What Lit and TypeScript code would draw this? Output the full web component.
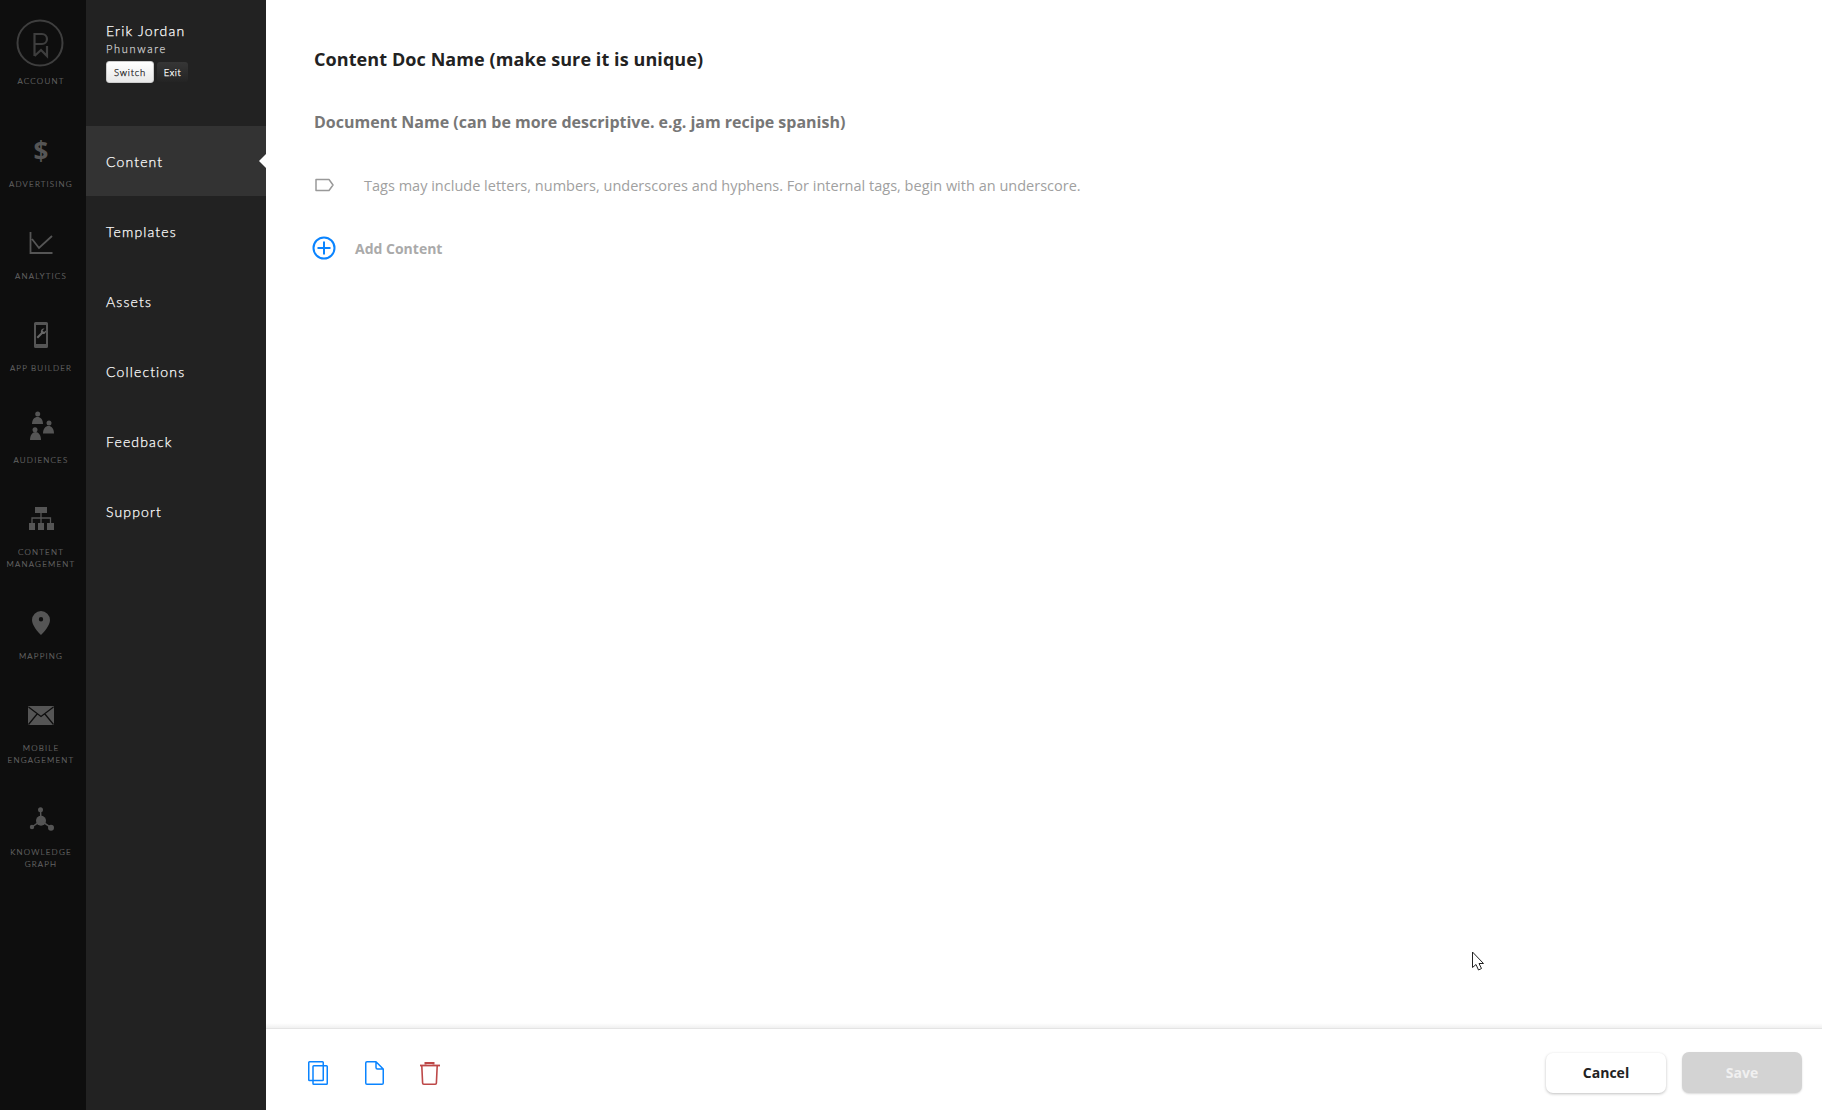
import { LitElement, html, css, svg } from "lit";
import { customElement } from "lit/decorators.js";

const railItems = [
  { label: ["ADVERTISING"], dollar: true, icon: svg`` },
  { label: ["ANALYTICS"], icon: svg`<path d="M9.500 9v21h22M11 16l7 9 13-12" fill="none" stroke="#555" stroke-width="1.800"/>` },
  { label: ["APP BUILDER"], icon: svg`<path fill="#555" fill-rule="evenodd" d="M14.500 7h11a1.500 1.500 0 0 1 1.500 1.500v23a1.500 1.500 0 0 1-1.500 1.500h-11a1.500 1.500 0 0 1-1.500-1.500v-23A1.500 1.500 0 0 1 14.500 7zm.5 3v19h10V10z"/><path fill="#666" d="M23.500 13.500l-2 2 1.500 1.500 2-1.500a3 3 0 0 1-3.500 3.500L17 23.500 15.500 22l4.500-4.500a3 3 0 0 1 3.500-4z"/>` },
  { label: ["AUDIENCES"], icon: svg`<g fill="#555"><circle cx="16.700" cy="7" r="2.500"/><path d="M11 17c0-4.500 2.500-7 5.500-7s5.500 2.500 5.500 7z"/><circle cx="28" cy="16" r="2.500"/><path d="M22 26.500c0-5 2.500-7.500 5.500-7.500s5.500 2.500 5.500 7.500z"/><circle cx="14" cy="22.700" r="2.500"/><path d="M9 33c0-5 2.500-8 5.500-8s5.500 3 5.500 8z"/></g>` },
  { label: ["CONTENT", "MANAGEMENT"], icon: svg`<g fill="#555"><rect x="14" y="8" width="12" height="6"/><rect x="8" y="24" width="6" height="7"/><rect x="17" y="24" width="6" height="7"/><rect x="26" y="24" width="7" height="7"/></g><path d="M20 14v10M11 24v-5h18.500v5" fill="none" stroke="#555" stroke-width="1.300"/>` },
  { label: ["MAPPING"], icon: svg`<path fill="#555" fill-rule="evenodd" d="M20 8a9 9 0 0 1 9 9c0 5.500-6 12-9 15-3-3-9-9.500-9-15a9 9 0 0 1 9-9zm0 6a2.200 2.200 0 1 0 0 4.400 2.200 2.200 0 0 0 0-4.400z"/>` },
  { label: ["MOBILE", "ENGAGEMENT"], icon: svg`<rect x="7" y="11" width="26" height="19" rx="1" fill="#555"/><path d="M7.500 12L20 21.500 32.500 12M7.500 29.500L16.500 18.500M32.500 29.500L23.500 18.500" fill="none" stroke="#0e0e0e" stroke-width="1.300"/>` },
  { label: ["KNOWLEDGE", "GRAPH"], icon: svg`<g fill="#555"><circle cx="20" cy="21.700" r="5"/><circle cx="19.500" cy="10.700" r="2.500"/><circle cx="11" cy="28" r="2.200"/><circle cx="30" cy="28.700" r="3"/></g><path d="M20 21.700L19.500 11M20 21.700L11 28M20 21.700L30 28.700" stroke="#555" stroke-width="1.500"/>` },
];

const menu = ["Content", "Templates", "Assets", "Collections", "Feedback", "Support"];

@customElement("app-root")
export class AppRoot extends LitElement {
  static styles = css`
    :host { display: flex; height: 1110px; width: 1822px; overflow: hidden; position: relative; font-family: "Open Sans", sans-serif; background: #fff; }
    .rail { width: 86px; flex: none; background: #0e0e0e; display: flex; flex-direction: column; align-items: center; padding: 20px 4px 0 0; box-sizing: border-box; font-family: Lato, sans-serif; }
    .account { display: flex; flex-direction: column; align-items: center; margin-bottom: 44px; }
    .account svg { width: 48px; height: 48px; margin: -1px 3px 8px 0; display: block; }
    .items { display: flex; flex-direction: column; align-items: center; gap: 33px; }
    .item { display: flex; flex-direction: column; align-items: center; }
    .item svg, .dollar { width: 40px; height: 40px; display: block; margin-bottom: 7px; }
    .dollar { font: 700 26px/40px "Open Sans", sans-serif; color: #555; text-align: center; }
    .lbl { font-size: 8px; line-height: 12px; letter-spacing: 1.200px; font-weight: 300; color: #666; -webkit-text-stroke: .2px #666; text-align: center; white-space: nowrap; }
    .panel { width: 180px; flex: none; background: #222; color: #fff; font-family: Lato, sans-serif; font-weight: 300; -webkit-text-stroke: .25px currentColor; }
    .user { height: 126px; padding: 22px 0 0 20px; box-sizing: border-box; }
    .name { font-size: 14px; line-height: 18px; letter-spacing: 1.200px; }
    .org { font-size: 11px; line-height: 14px; letter-spacing: 1.700px; color: #ccc; margin-top: 2px; }
    .btns { display: flex; gap: 3px; align-items: center; margin-top: 5px; }
    .sw { width: 48px; height: 22px; box-sizing: border-box; background: linear-gradient(#fff, #e8e8e8); border: 1px solid #ccc; color: #222; border-radius: 3px; font-size: 9.500px; letter-spacing: .8px; display: flex; align-items: center; justify-content: center; }
    .ex { width: 31px; height: 20px; background: linear-gradient(#363636, #242424); color: #fff; border-radius: 3px; font-size: 9.500px; letter-spacing: .5px; display: flex; align-items: center; justify-content: center; }
    .m { height: 70px; display: flex; align-items: center; padding-left: 20px; font-size: 14px; letter-spacing: 1.150px; position: relative; }
    .m.on { background: #333; }
    .m.on::after { content: ""; position: absolute; right: 0; top: 28px; border: 7px solid transparent; border-right-color: #fff; border-left-width: 0; }
    .main { flex: 1; display: flex; flex-direction: column; min-width: 0; }
    .body { flex: 1; padding: 47px 0 0 48px; box-sizing: border-box; }
    .title { font-size: 18px; font-weight: 700; line-height: 24px; letter-spacing: .085px; color: #222; }
    .doc { font-size: 16px; font-weight: 700; line-height: 22px; color: #777; margin-top: 40px; }
    .tags { display: flex; align-items: center; margin-top: 41px; height: 22px; font-size: 14.500px; letter-spacing: .01px; color: #a0a0a0; }
    .tags svg { width: 22px; height: 16px; margin-right: 28px; display: block; }
    .add { display: flex; align-items: center; margin-top: 40px; margin-left: -2px; font-size: 14px; font-weight: 700; color: #aaa; }
    .add svg { width: 24px; height: 24px; margin-right: 19px; display: block; }
    .foot { height: 82px; flex: none; position: relative; border-top: 1px solid #e4e4e4; box-sizing: border-box; display: flex; align-items: center; padding: 6px 20px 0 40px; }
    .foot::before { content: ""; position: absolute; left: 0; right: 0; top: -6px; height: 5px; background: linear-gradient(to bottom, rgba(0,0,0,0), rgba(0,0,0,.06)); }
    .icons { display: flex; gap: 32px; flex: 1; }
    .icons svg { width: 24px; height: 24px; display: block; }
    .btn { width: 120px; height: 40px; border-radius: 7px; display: flex; align-items: center; justify-content: center; font-size: 14px; font-weight: 700; }
    .cancel { color: #222; background: #fff; box-shadow: 0 1px 3px rgba(0,0,0,.25); margin-right: 16px; }
    .save { color: #f0f0f0; background: #d3d3d3; height: 41px; box-shadow: 0 1px 2px rgba(0,0,0,.15); }
    .cursor { position: absolute; left: 1471px; top: 951px; width: 14px; height: 21px; }
  `;

  render() {
    return html`
      <nav class="rail">
        <div class="account">
          <svg viewBox="0 0 48 48" fill="none" stroke="#3e3e3e" stroke-width="2">
            <circle cx="24" cy="24" r="22.500"/>
            <path d="M18.500 37V15h7.500a5 5 0 0 1 0 10h-7.500M18.500 37l6.500-6 6 6V27" stroke-width="2.200"/>
          </svg>
          <div class="lbl">ACCOUNT</div>
        </div>
        <div class="items">
          ${railItems.map(i => html`<div class="item">${i.dollar ? html`<div class="dollar">$</div>` : html`<svg viewBox="0 0 40 40">${i.icon}</svg>`}${i.label.map(l => html`<div class="lbl">${l}</div>`)}</div>`)}
        </div>
      </nav>
      <aside class="panel">
        <div class="user">
          <div class="name">Erik Jordan</div>
          <div class="org">Phunware</div>
          <div class="btns"><div class="sw">Switch</div><div class="ex">Exit</div></div>
        </div>
        ${menu.map((m, i) => html`<div class="m ${i === 0 ? "on" : ""}">${m}</div>`)}
      </aside>
      <main class="main">
        <div class="body">
          <div class="title">Content Doc Name (make sure it is unique)</div>
          <div class="doc">Document Name (can be more descriptive. e.g. jam recipe spanish)</div>
          <div class="tags">
            <svg viewBox="0 0 22 16" fill="none" stroke="#999" stroke-width="1.500"><path d="M2 2.500h13l4 5.500-4 5.500H2z" stroke-linejoin="round"/></svg>
            Tags may include letters, numbers, underscores and hyphens. For internal tags, begin with an underscore.
          </div>
          <div class="add">
            <svg viewBox="0 0 24 24" fill="none" stroke="#0a84ff" stroke-width="2"><circle cx="12" cy="12" r="10.500"/><path d="M12 5.500v13M5.500 12h13"/></svg>
            Add Content
          </div>
        </div>
        <div class="foot">
          <div class="icons">
            <svg viewBox="0 0 24 24" fill="none" stroke="#0a84ff" stroke-width="1.500"><rect x="2.750" y=".75" width="14.500" height="18.750" rx=".8"/><rect x="7" y="4.750" width="14.250" height="18.500" rx=".8"/></svg>
            <svg viewBox="0 0 24 24" fill="none" stroke="#0a84ff" stroke-width="1.500" stroke-linejoin="round"><path d="M5 .75h9L21.250 8v14a1.250 1.250 0 0 1-1.250 1.250H5A1.250 1.250 0 0 1 3.750 22V2A1.250 1.250 0 0 1 5 .75zM14 .75V6.500A1.500 1.500 0 0 0 15.500 8h5.750"/></svg>
            <svg viewBox="0 0 24 24" fill="none" stroke="#bd4848" stroke-width="1.600"><path d="M2 4.500h20" stroke-width="1.800"/><path d="M7.500 3.500V2h8v1.500" stroke-width="2"/><path d="M3.800 5l.8 17a1.200 1.200 0 0 0 1.200 1.200h11.400a1.200 1.200 0 0 0 1.200-1.200l.8-17"/></svg>
          </div>
          <div class="btn cancel">Cancel</div>
          <div class="btn save">Save</div>
        </div>
      </main>
      <svg class="cursor" viewBox="0 0 14 21"><path d="M1.500 1v15.500l3.500-3 2.500 5.500 3-1.500-2.500-5h4.500z" fill="#fff" stroke="#222" stroke-width="1"/></svg>
    `;
  }
}
